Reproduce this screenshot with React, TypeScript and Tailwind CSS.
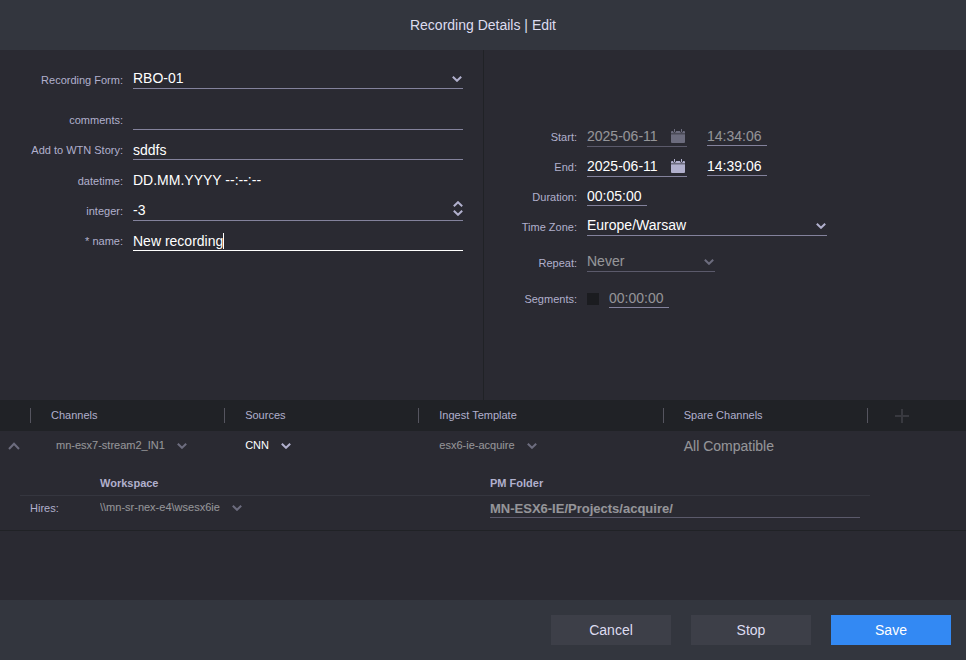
import { useState } from "react";
import type { ReactNode, SelectHTMLAttributes } from "react";
import clsx from "clsx";

function Chevron({ up = false, className }: { up?: boolean; className?: string }) {
  return (
    <svg aria-hidden="true" className={clsx("pointer-events-none", className)} fill="none" height="6" viewBox="0 0 10 6" width="10">
      <path d={up ? "M.8 5.200 5 1.200 9.200 5.200" : "M.8 .8 5 4.800 9.200 .8"} stroke="currentColor" strokeWidth="2" />
    </svg>
  );
}

function CalendarIcon() {
  return (
    <svg aria-hidden="true" fill="currentColor" height="14" viewBox="0 0 14 14" width="14">
      <path d="M0 4.500V3a1 1 0 0 1 1-1h1q0 1.700 1.500 1.700T5 2h4q0 1.700 1.500 1.700T12 2h1a1 1 0 0 1 1 1v1.500z" />
      <path d="M0 5.300h14V13a1 1 0 0 1-1 1H1a1 1 0 0 1-1-1z" />
      <path d="M3 0h1v3H3zM10 0h1v3h-1z" />
    </svg>
  );
}

function Row({ label, htmlFor, className, children }: { label: string; htmlFor: string; className?: string; children: ReactNode }) {
  return (
    <div className={clsx("flex items-start gap-2.5 pt-[5px]", className ?? "h-[30px]")}>
      <label className="w-(--label) shrink-0 text-right text-[11px] leading-5 text-[#b1b0cd]" htmlFor={htmlFor}>{label}</label>
      {children}
    </div>
  );
}

// full width drop-down with an underline
function LineSelect({ className, ...props }: SelectHTMLAttributes<HTMLSelectElement>) {
  return (
    <div className={clsx("relative h-[19px] border-b", props.disabled ? "border-[#5b5a6b] text-[#6c6c7e]" : "border-[#83829c] text-[#b1b0cd]", className)}>
      <select className={clsx("block h-4 w-full appearance-none bg-transparent pr-5 text-sm leading-4 outline-none", props.disabled ? "text-white opacity-50" : "text-white")} {...props} />
      <Chevron className="absolute top-1.5 right-px" />
    </div>
  );
}

// compact drop-down used in the channel rows
function CellSelect({ label, value, disabled = false }: { label: string; value: string; disabled?: boolean }) {
  return (
    <span className={clsx("relative flex w-fit items-center", disabled ? "text-[#6c6c7e]" : "text-[#b1b0cd]")}>
      <select aria-label={label} className={clsx("h-5 appearance-none bg-transparent pr-[22px] text-[11px] text-white outline-none", disabled && "opacity-50")} defaultValue={value} disabled={disabled}>
        <option>{value}</option>
      </select>
      <Chevron className="absolute top-[7px] right-0" />
    </span>
  );
}

const field = "block h-5 w-full min-w-0 rounded-none border-b border-[#83829c] bg-transparent text-sm leading-4 text-white outline-none";
const timeField = "block h-[19px] w-[60px] border-b border-[#83829c] bg-transparent text-sm leading-4 outline-none";

function DateField({ id, value, disabled = false }: { id: string; value: string; disabled?: boolean }) {
  return (
    <div className={clsx("flex h-5 w-[100px] items-start border-b", disabled ? "border-[#5b5a6b]" : "border-[#83829c]")}>
      <input className={clsx("h-[18px] w-[84px] bg-transparent text-sm leading-4 text-white outline-none", disabled && "opacity-50")} defaultValue={value} disabled={disabled} id={id} />
      <button aria-label={`Pick ${id} date`} className={clsx("mt-0.5", disabled ? "text-[#6c6c7e]" : "text-[#b1b0cd]")} disabled={disabled} type="button"><CalendarIcon /></button>
    </div>
  );
}

export default function App() {
  const [count, setCount] = useState(-3);
  const [name, setName] = useState("New recording");
  const [editing, setEditing] = useState(true);

  return (
    <div className="flex min-h-screen flex-col bg-[#2a2a32] font-['Liberation_Sans',Arial,sans-serif] text-sm text-white">
      <header className="flex h-[50px] items-center justify-center bg-[#33363e]">
        <h1 className="text-[#dddcf0]">Recording Details | Edit</h1>
      </header>

      <div className="grid min-h-[350px] grid-cols-[484fr_482fr]">
        <section className="border-r border-[#202226] px-5 pt-[15px] [--label:103px]">
          <Row className="mb-2.5 h-[30px]" htmlFor="form" label="Recording Form:">
            <LineSelect className="flex-1" defaultValue="RBO-01" id="form"><option>RBO-01</option></LineSelect>
          </Row>
          <Row htmlFor="comments" label="comments:">
            <textarea className={clsx(field, "resize-none overflow-hidden")} id="comments" rows={1} />
          </Row>
          <Row className="h-[31px]" htmlFor="story" label="Add to WTN Story:">
            <input className={field} defaultValue="sddfs" id="story" />
          </Row>
          <Row htmlFor="datetime" label="datetime:">
            <input className="block h-[18px] w-full bg-transparent leading-4 outline-none" defaultValue="DD.MM.YYYY --:--:--" id="datetime" />
          </Row>
          <Row htmlFor="integer" label="integer:">
            <div className="relative flex-1">
              <input className={clsx(field, "pb-0.5 [appearance:textfield] [&::-webkit-inner-spin-button]:appearance-none")} id="integer" onChange={(event) => setCount(Number(event.target.value))} type="number" value={count} />
              <div className="absolute top-0 right-0 flex flex-col gap-[3px] text-[#b1b0cd]">
                <button aria-label="Increase" onClick={() => setCount(count + 1)} type="button"><Chevron up /></button>
                <button aria-label="Decrease" onClick={() => setCount(count - 1)} type="button"><Chevron /></button>
              </div>
            </div>
          </Row>
          <Row className="h-[31px]" htmlFor="name" label="* name:">
            <div className="relative flex-1">
              <input
                className="block h-5 w-full min-w-0 border-b border-white bg-transparent text-sm leading-4 text-white outline-none"
                id="name"
                onChange={(event) => setName(event.target.value)}
                onFocus={() => setEditing(false)}
                value={name}
              />
              {editing && <span className="absolute top-0.5 left-[90px] h-4 w-px bg-white" />}
            </div>
          </Row>
        </section>

        <section className="px-5 pt-[72px] [--label:73px]">
          <Row htmlFor="start" label="Start:">
            <DateField disabled id="start" value="2025-06-11" />
            <input aria-label="Start time" className={clsx(timeField, "ml-2.5 text-white/50")} defaultValue="14:34:06" disabled />
          </Row>
          <Row htmlFor="end" label="End:">
            <DateField id="end" value="2025-06-11" />
            <input aria-label="End time" className={clsx(timeField, "ml-2.5")} defaultValue="14:39:06" />
          </Row>
          <Row htmlFor="duration" label="Duration:">
            <input className={timeField} defaultValue="00:05:00" id="duration" />
          </Row>
          <Row className="mb-1.5 h-[30px]" htmlFor="zone" label="Time Zone:">
            <LineSelect className="w-60" defaultValue="Europe/Warsaw" id="zone"><option>Europe/Warsaw</option></LineSelect>
          </Row>
          <Row className="mb-1.5 h-[30px]" htmlFor="repeat" label="Repeat:">
            <LineSelect className="w-32" defaultValue="Never" disabled id="repeat"><option>Never</option></LineSelect>
          </Row>
          <Row htmlFor="segments" label="Segments:">
            <input className="mt-1 size-3 appearance-none bg-[#1b1c20] checked:bg-[#3389f3]" id="segments" type="checkbox" />
            <input aria-label="Segment length" className={clsx(timeField, "text-white/50")} defaultValue="00:00:00" disabled />
          </Row>
        </section>
      </div>

      <main className="flex-1">
        <table className="w-full table-fixed border-b border-[#202226] text-left">
          <colgroup>
            <col className="w-[30px]" />
            <col className="w-[20.1%]" />
            <col className="w-[20.1%]" />
            <col className="w-[25.3%]" />
            <col className="w-[21.1%]" />
            <col />
          </colgroup>
          <thead className="bg-[#202226] text-[11px] text-[#b1b0cd]">
            <tr className="h-[31px]">
              <td />
              {["Channels", "Sources", "Ingest Template", "Spare Channels"].map((title) => (
                <th className="p-0 font-normal" key={title} scope="col">
                  <div className="border-l border-[#55555f] pl-5 leading-[15px]">{title}</div>
                </th>
              ))}
              <td>
                <div className="flex h-[15px] items-center border-l border-[#55555f] pl-[27px]">
                  <button aria-label="Add channel" disabled type="button">
                    <svg aria-hidden="true" className="block text-[#38393f]" height="14" viewBox="0 0 14 14" width="14">
                      <path d="M7 0v14M0 7h14" stroke="currentColor" strokeWidth="2" />
                    </svg>
                  </button>
                </div>
              </td>
            </tr>
          </thead>
          <tbody>
            <tr className="h-[29px]">
              <td className="pl-2">
                <button aria-expanded="true" aria-label="Collapse row" className="block text-[#6c6c7e]" type="button">
                  <svg aria-hidden="true" fill="none" height="8" viewBox="0 0 12 8" width="12">
                    <path d="M1 7 6 1.700 11 7" stroke="currentColor" strokeWidth="2" />
                  </svg>
                </button>
              </td>
              <td className="pl-[26px]"><CellSelect disabled label="Channel" value="mn-esx7-stream2_IN1" /></td>
              <td className="pl-[21px]"><CellSelect label="Source" value="CNN" /></td>
              <td className="pl-[21px]"><CellSelect disabled label="Ingest template" value="esx6-ie-acquire" /></td>
              <td className="pl-[21px]"><span className="opacity-50">All Compatible</span></td>
              <td />
            </tr>
            <tr>
              <td className="pt-2.5 pr-24 pl-5" colSpan={6}>
                <table className="w-full table-fixed text-[11px] text-[#b1b0cd]">
                  <thead>
                    <tr className="h-[25px] border-b border-[#35363f]">
                      <td className="w-20" />
                      <th className="w-[390px] pt-1 font-bold" scope="col">Workspace</th>
                      <th className="pt-1 font-bold" scope="col">PM Folder</th>
                    </tr>
                  </thead>
                  <tbody>
                    <tr className="h-[35px] align-top">
                      <th className="pt-[3px] pl-2.5 font-normal leading-[18px]" scope="row">Hires:</th>
                      <td className="pt-0.5"><CellSelect disabled label="Workspace" value="\\mn-sr-nex-e4\wsesx6ie" /></td>
                      <td className="pt-[5px] pr-2.5">
                        <div className="border-b border-[#5b5a6b]">
                          <input aria-label="PM Folder" className="block h-4 w-full bg-transparent text-[13px] leading-4 font-bold text-white opacity-50 outline-none" defaultValue="MN-ESX6-IE/Projects/acquire/" disabled />
                        </div>
                      </td>
                    </tr>
                  </tbody>
                </table>
              </td>
            </tr>
          </tbody>
        </table>
      </main>

      <footer className="flex h-[60px] items-center justify-end gap-5 bg-[#33363e] pr-[15px]">
        <button className="h-[30px] w-[120px] bg-[#3d3f48] text-[#dddcf0]" type="button">Cancel</button>
        <button className="h-[30px] w-[120px] bg-[#3d3f48] text-[#dddcf0]" type="button">Stop</button>
        <button className="h-[30px] w-[120px] bg-[#3389f3] text-white" type="submit">Save</button>
      </footer>
    </div>
  );
}
